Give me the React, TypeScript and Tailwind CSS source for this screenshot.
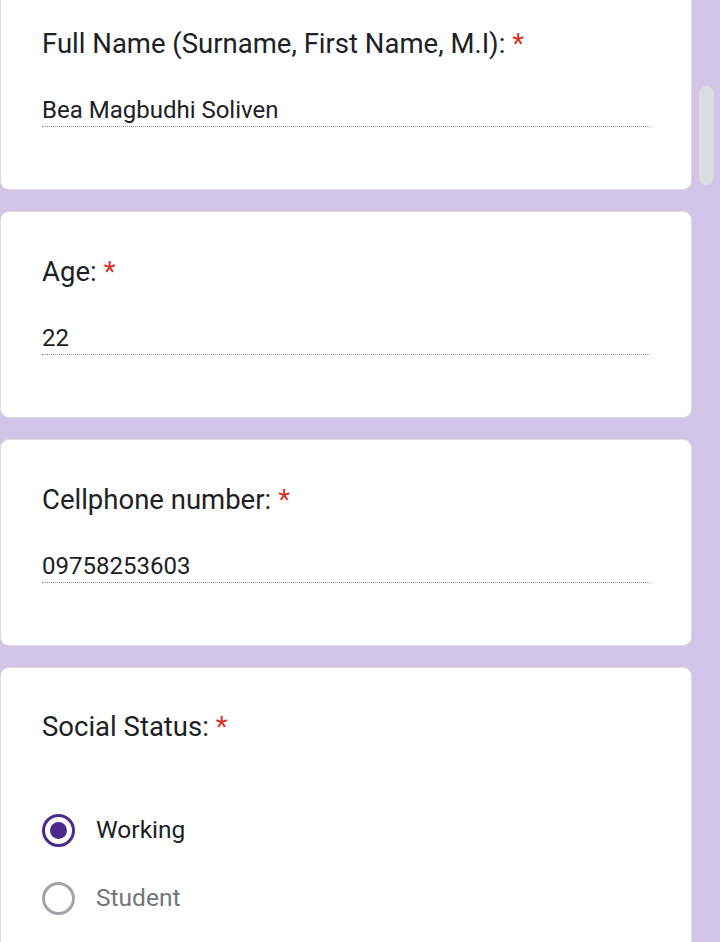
const fields = [
  { title: 'Full Name (Surname, First Name, M.I):', value: 'Bea Magbudhi Soliven', first: true },
  { title: 'Age:', value: '22' },
  { title: 'Cellphone number:', value: '09758253603' },
];

function Required() {
  return <span className="ml-[7px] text-[#d93025]">*</span>;
}

function TextCard({ title, value, first }: { title: string; value: string; first?: boolean }) {
  return (
    <div
      className={`rounded-[9px] border border-[#dadce0] bg-white pb-[62px] pl-[41px] pr-[41px] pt-[43px] ${first ? '-mt-[17px]' : ''}`}
    >
      <h2 className="text-[27.5px] leading-[34px] text-[#202124]">
        {title}
        <Required />
      </h2>
      <div className="mt-[35px] border-b border-dotted border-[#8a8d91] pb-[2px] text-[24px] leading-[28px] text-[#202124]">
        {value}
      </div>
    </div>
  );
}

function Radio({ label, checked }: { label: string; checked?: boolean }) {
  return (
    <div className="flex h-[34px] items-center gap-[21px]">
      <span
        className={`flex h-[33px] w-[33px] items-center justify-center rounded-full border-[3px] ${
          checked ? 'border-[#4b2a8c]' : 'border-[#a0a3a7]'
        }`}
      >
        {checked && <span className="h-[17px] w-[17px] rounded-full bg-[#4b2a8c]" />}
      </span>
      <span className={`text-[24.5px] ${checked ? 'text-[#202124]' : 'text-[#70757a]'}`}>{label}</span>
    </div>
  );
}

export default function App() {
  return (
    <div
      className="relative h-[942px] overflow-hidden bg-[#d1c5e8] pr-[28px]"
      style={{ fontFamily: 'Roboto, "Liberation Sans", sans-serif' }}
    >
      <div className="flex flex-col gap-[21px]">
        {fields.map(f => (
          <TextCard key={f.title} {...f} />
        ))}
        <div className="rounded-[9px] border border-[#dadce0] bg-white pb-[40px] pl-[41px] pt-[42px]">
          <h2 className="text-[27.5px] leading-[34px] text-[#202124]">
            Social Status:
            <Required />
          </h2>
          <div className="mt-[69px] flex flex-col gap-[34px]">
            <Radio label="Working" checked />
            <Radio label="Student" />
          </div>
        </div>
      </div>
      <div className="absolute left-[699px] top-[86px] h-[99px] w-[15px] rounded-full bg-[#dadce0]" />
    </div>
  );
}
